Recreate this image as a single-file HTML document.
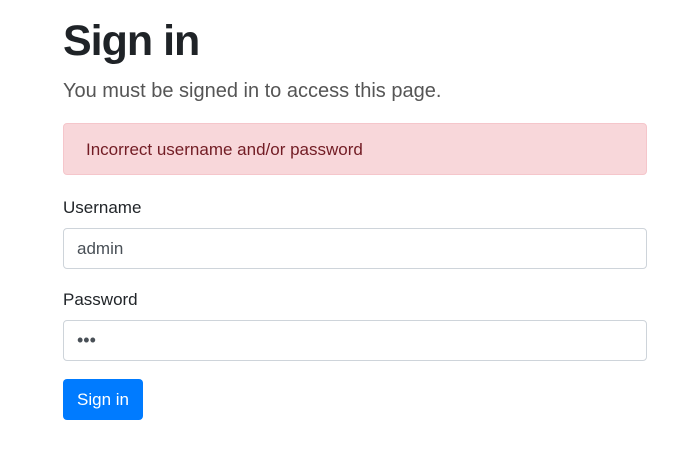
<!DOCTYPE html>
<html><head><style>
body{margin:0;background:#fff;font-family:"Liberation Sans",sans-serif;color:#212529;width:700px;height:469px;overflow:hidden}
.c{position:absolute;left:63px;width:584px}
h1{position:absolute;left:63px;top:15px;margin:0;font-size:43px;font-weight:bold;line-height:52px;color:#1f2327;letter-spacing:-1px}
.lead{position:absolute;left:63px;top:77px;font-size:20px;font-weight:300;color:#555;line-height:28px}
.alert{top:123px;height:52px;background:#f8d7da;border:1px solid #f5c6cb;border-radius:4px;color:#721c24;font-size:17px;line-height:52px;box-sizing:border-box;padding-left:22px}
.lbl{font-size:17px;color:#212529}
.inp{height:41px;border:1px solid #ced4da;border-radius:4px;box-sizing:border-box;font-size:17px;line-height:39px;padding-left:13px;color:#495057}
.btn{position:absolute;left:63px;top:379px;width:80px;height:41px;background:#007bff;border-radius:4px;color:#fff;font-size:17px;line-height:41px;text-align:center}
</style></head><body>
<h1>Sign in</h1>
<div class="lead">You must be signed in to access this page.</div>
<div class="c alert">Incorrect username and/or password</div>
<div class="c lbl" style="top:198px">Username</div>
<div class="c inp" style="top:228px">admin</div>
<div class="c lbl" style="top:290px">Password</div>
<div class="c inp" style="top:320px;font-size:18px;letter-spacing:0px">•••</div>
<div class="btn">Sign in</div>
</body></html>
